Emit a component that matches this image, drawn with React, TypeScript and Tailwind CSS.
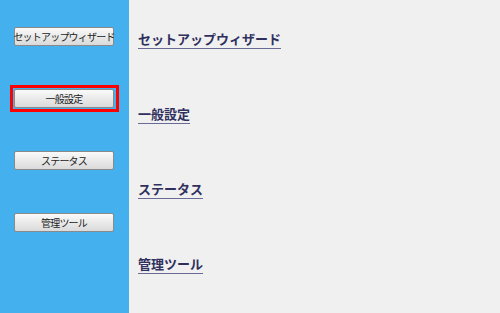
import React from 'react'

const buttons = [
  { label: 'セットアップウィザード', active: false },
  { label: '一般設定', active: true },
  { label: 'ステータス', active: false },
  { label: '管理ツール', active: false },
]

const headings = ['セットアップウィザード', '一般設定', 'ステータス', '管理ツール']

function MenuButton({ label }: { label: string }) {
  return (
    <button className="flex h-[19px] w-[100px] items-center justify-center whitespace-nowrap rounded-[2px] border border-[#8a8a8a] bg-gradient-to-b from-[#fafafa] to-[#dadada] px-0 text-[10px] leading-none tracking-[-0.8px] text-[#222]">
      {label}
    </button>
  )
}

export default function App() {
  return (
    <div
      className="flex h-[313px] w-[500px] overflow-hidden"
      style={{ fontFamily: '"Noto Sans CJK JP", "Noto Sans", sans-serif' }}
    >
      {/* left menu */}
      <div className="flex w-[129px] shrink-0 flex-col items-start gap-[43px] bg-[#44b0ee] pl-[14px] pt-[27px]">
        {buttons.map((b) =>
          b.active ? (
            <div key={b.label} className="-m-[4px] border-[3px] border-[#ff0000] pb-[1px] pl-[1px] pr-[2px] pt-[1px]">
              <MenuButton label={b.label} />
            </div>
          ) : (
            <MenuButton key={b.label} label={b.label} />
          )
        )}
      </div>

      {/* content */}
      <div className="flex flex-1 flex-col bg-[#f0f0f0] pl-[9px] pt-[31px]">
        {headings.map((h) => (
          <div key={h} className="flex h-[75px] shrink-0 items-start">
            <span className="border-b border-[#6a6a96] pb-[1px] text-[13px] font-bold leading-[16px] text-[#30305e]">
              {h}
            </span>
          </div>
        ))}
      </div>
    </div>
  )
}
